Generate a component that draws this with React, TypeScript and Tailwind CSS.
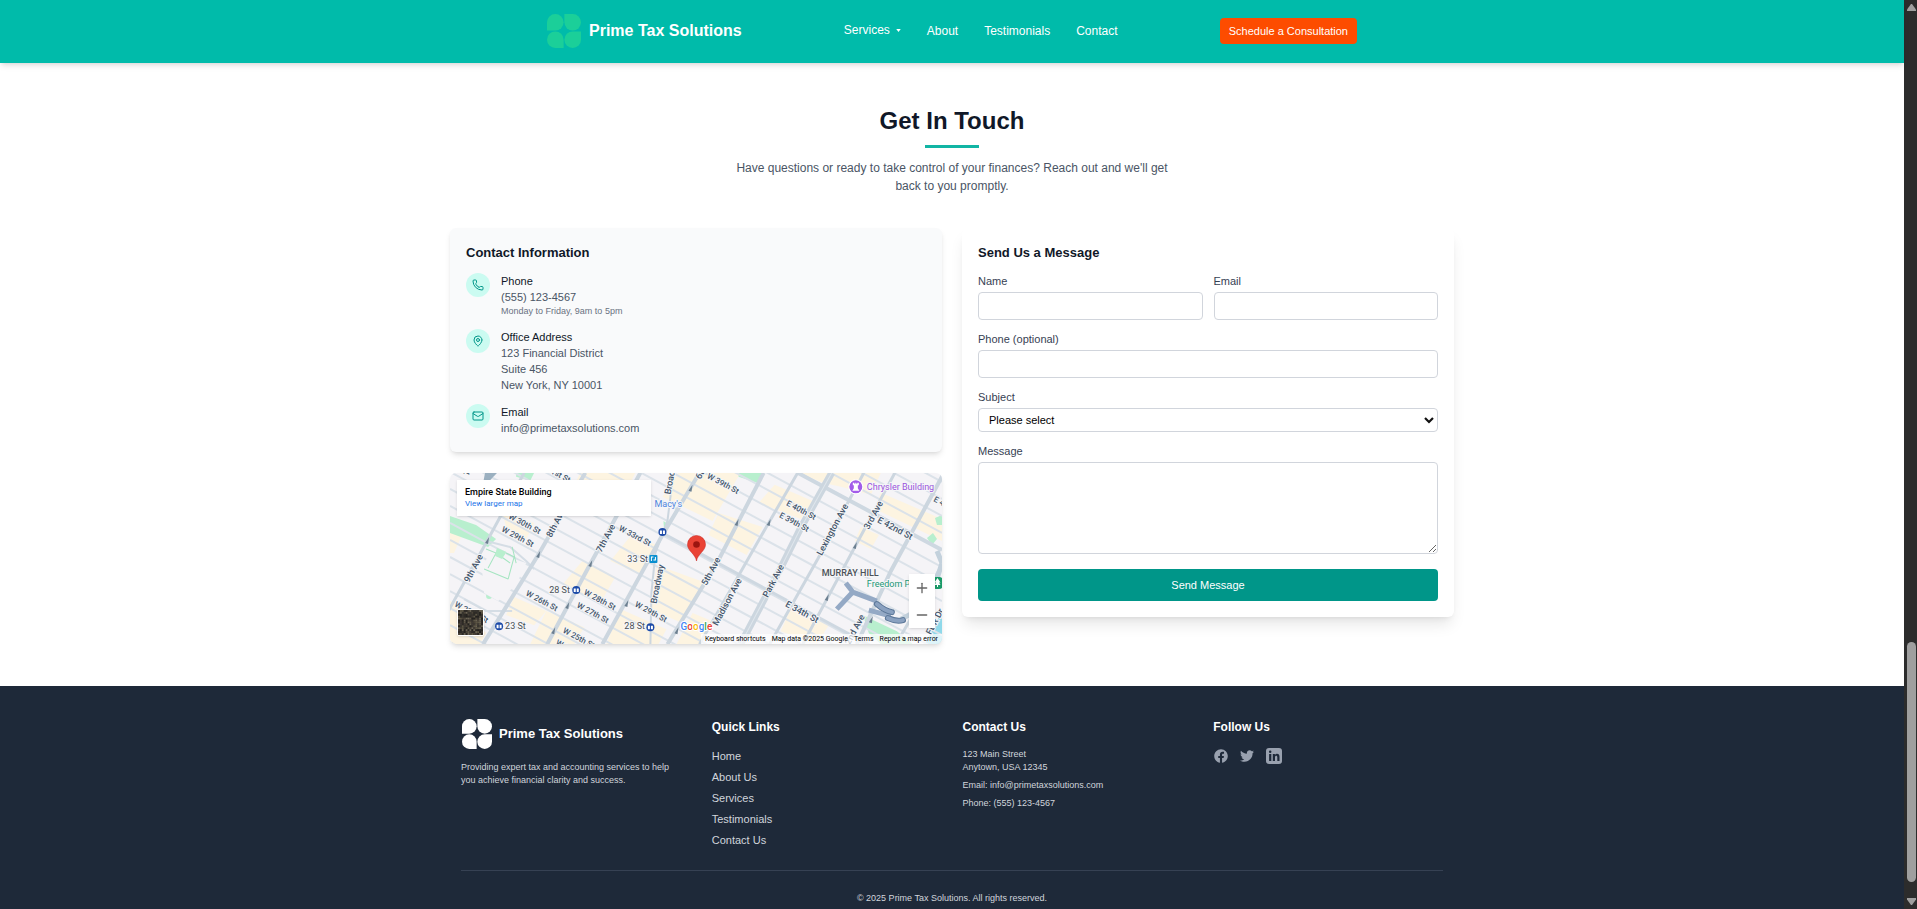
import React from "react";
import { Phone, MapPin, Mail, Plus, Minus } from "lucide-react";
import { FaFacebook, FaTwitter } from "react-icons/fa";

function Logo({ className }: { className: string }) {
  return (
    <svg viewBox="0 0 34 34" className={className} fill="currentColor" aria-hidden="true">
      {[0, 90, 180, 270].map((angle) => (
        <path
          key={angle}
          d="M0 16.6V8.3A8.3 8.3 0 1 1 8.3 16.6Z"
          transform={`rotate(${angle} 17 17)`}
        />
      ))}
    </svg>
  );
}

function LinkedInIcon() {
  return (
    <svg viewBox="0 0 16 16" className="size-4" aria-hidden="true">
      <rect width="16" height="16" rx="3" fill="currentColor" />
      <g fill="#1e2939">
        <circle cx="4.2" cy="3.8" r="1.25" />
        <rect x="3.1" y="6" width="2.2" height="7" />
        <path d="M6.8 6h2.1v1c.5-.8 1.2-1.2 2.1-1.2 1.7 0 2.5 1.1 2.5 2.900V13h-2.200V9.200c0-.9-.3-1.500-1.100-1.500-.8 0-1.200.6-1.200 1.500V13H6.800z" />
      </g>
    </svg>
  );
}

function Header() {
  return (
    <header className="relative z-10 bg-[#00bbaa] text-white shadow-md">
      <div className="mx-auto flex h-[63px] max-w-[810px] items-center justify-between pb-0.5">
        <a href="#home" className="flex items-center gap-2">
          <Logo className="size-[34px] text-[#1bcf99]" />
          <span className="text-base leading-6 font-bold">Prime Tax Solutions</span>
        </a>
        <nav className="flex items-center gap-[26px] text-xs">
          <button type="button" className="flex items-center gap-1.5 pb-px">
            Services
            <svg viewBox="0 0 6 4" className="h-[3px] w-[5px]" fill="currentColor" aria-hidden="true">
              <path d="M0 0h6L3 4z" />
            </svg>
          </button>
          <a href="#about">About</a>
          <a href="#testimonials">Testimonials</a>
          <a href="#contact">Contact</a>
        </nav>
        <a
          href="#schedule"
          className="rounded bg-[#fd4c00] px-[9px] py-[5px] text-[11px] leading-4"
        >
          Schedule a Consultation
        </a>
      </div>
    </header>
  );
}

function ContactItem({
  icon,
  title,
  children,
}: {
  icon: React.ReactNode;
  title: string;
  children: React.ReactNode;
}) {
  return (
    <div className="flex gap-[11px]">
      <div className="flex size-6 shrink-0 items-center justify-center rounded-full bg-[#cbfbf1] text-[#009689]">
        {icon}
      </div>
      <div className="text-[11px] leading-4 text-[#4a5565]">
        <h4 className="font-medium text-[#101828]">{title}</h4>
        {children}
      </div>
    </div>
  );
}

const streetNumbers = Array.from({ length: 28 }, (_, i) => 21 + i);

const avenues: { d: string; w: number }[] = [
  { d: "M-20 171L0 135L37 68L74 0", w: 3 },
  { d: "M33 171L88 82L135 0", w: 4 },
  { d: "M97 171L140 91L190 0", w: 4 },
  { d: "M152 171L212 62L249 0", w: 4 },
  { d: "M200 171L201 120L205 80L217 48L223 0", w: 2 },
  { d: "M217 171L267 89L313 0", w: 4 },
  { d: "M249 171L318 50L347 0", w: 3 },
  { d: "M290 171L330 95L350 55L381 0", w: 7 },
  { d: "M319 171L367 86L413 0", w: 3 },
  { d: "M352 171L404 74L444 0", w: 3 },
  { d: "M406 171L440 98L493 0", w: 4 },
  { d: "M445 171L491 92", w: 3 },
];

const blocks = [
  "M150 0L185 0L168 34L120 20L130 0Z",
  "M228 0L290 0L262 48L212 24Z",
  "M181 62L206 72L190 102L160 88Z",
  "M206 92L256 110L232 150L200 136Z",
  "M132 88L165 104L150 130L112 112Z",
  "M348 0L430 0L420 22L390 14L372 10Z",
  "M430 20L491 46L491 68L424 36Z",
  "M96 138L134 154L124 171L80 171Z",
  "M170 136L216 156L208 171L156 171Z",
  "M0 58L12 62L4 80L0 80Z",
  "M52 38L84 50L76 66L56 54Z",
  "M64 124L96 138L84 152L56 142Z",
  "M0 128L20 138L36 160L30 171L0 171Z",
  "M324 12L362 28L350 46L308 30Z",
  "M268 40L312 54L296 82L258 62Z",
  "M242 140L262 148L250 171L226 171Z",
  "M340 136L378 152L366 171L330 158Z",
  "M410 54L428 62L420 76L404 68Z",
];

const streetLabels: [string, number, number, number][] = [
  ["31st St", 96, -2, 8],
  ["W 30th St", 58, 45, 8],
  ["W 29th St", 51, 58, 8],
  ["W 33rd St", 168, 57, 8],
  ["W 28th St", 133, 121, 8],
  ["W 27th St", 126, 134, 8],
  ["W 26th St", 75, 122, 8],
  ["W 25th St", 112, 159, 8],
  ["W 24th St", 105, 171, 8],
  ["W 29th St", 184, 133, 8],
  ["W 22nd St", 4, 133, 8],
  ["W 39th St", 256, 5, 8],
  ["E 40th St", 335, 32, 8],
  ["E 39th St", 328, 44, 8],
  ["E 42nd St", 426, 49, 9],
  ["E 34th St", 334, 133, 9],
  ["E 43rd St", 482, 28, 8],
];

const avenueLabels: [string, number, number, number][] = [
  ["10th", 18, 4, -62],
  ["9th Ave", 19, 110, -62],
  ["8th Ave", 101, 65, -62],
  ["7th Ave", 151, 80, -62],
  ["6th Ave", 250, 7, -62],
  ["5th Ave", 256, 113, -62],
  ["Madison Ave", 267, 153, -62],
  ["Park Ave", 317, 125, -62],
  ["Lexington Ave", 371, 83, -62],
  ["3rd Ave", 418, 57, -62],
  ["2nd Ave", 399, 172, -62],
  ["Broadway", 206, 131, -79],
  ["Broadway", 220, 22, -79],
  ["FDR Dr", 480, 162, -62],
];

const stations: [number, number][] = [
  [126, 117],
  [49, 153],
  [200, 154],
  [212, 59],
];

const arrows: [number, number][] = [
  [37, 68],
  [88, 82],
  [140, 91],
  [117, 133],
  [103, 158],
  [240, 16],
  [176, 131],
  [226, 158],
  [286, 50],
  [318, 50],
  [404, 73],
  [376, 125],
  [420, 147],
];

function MapDrawing() {
  return (
    <svg
      viewBox="0 0 491 171"
      preserveAspectRatio="xMidYMid slice"
      className="size-full font-[Roboto,sans-serif]"
      role="img"
      aria-label="Map of Midtown Manhattan"
    >
      <rect width="491" height="171" fill="#f5f4f7" />
      <g fill="#fdf4e1">
        {blocks.map((d) => (
          <path key={d} d={d} />
        ))}
      </g>
      <g fill="#b8efce">
        <path d="M0 43L26 52L46 66L38 74L0 60Z" />
        <path d="M288 0L312 0L306 10L288 4Z" />
        <path d="M66 0L84 0L80 8L66 4Z" />
        <path d="M47 75L56 79L52 86L45 83Z" />
        <path d="M40 98L51 103L47 110L37 107Z" />
        <circle cx="39" cy="123" r="3" />
        <path d="M412 142L420 146L446 158L462 171L430 171L418 160Z" />
        <path d="M476 65L482 60L486 66L481 72Z" />
        <path d="M213 48L219 52L214 62Z" />
        <path d="M484 45L491 42L491 52L486 52Z" />
      </g>
      <path d="M491 138V171H474Z" fill="#8fd9ea" />
      <g stroke="#dbe2e9" strokeWidth="2" fill="none">
        {streetNumbers.map((n) => {
          const y = -52 + 17 * (34 - n);
          return <line key={n} x1="0" y1={y} x2="491" y2={y + 265} />;
        })}
      </g>
      <path d="M40 78L76 90L66 112L48 128L34 120L32 96Z" fill="#f5f4f7" />
      <path d="M36 68L60 74L76 88L84 96M14 126L36 138L62 138" stroke="#d5dde5" strokeWidth="2" fill="none" />
      <path d="M36 76L46 80L38 95M56 80L64 84L58 106M46 80L60 90M34 96L58 106M62 74L66 90" stroke="#a5e5c1" fill="none" />
      <path d="M45 83L47 75L56 79L52 86Z" fill="#b8efce" />
      <path d="M347 0L373 14L491 77" stroke="#ced8e1" strokeWidth="4" fill="none" />
      <path d="M212 60L491 211" stroke="#ced8e1" strokeWidth="3" fill="none" />
      <g stroke="#ccd6df" fill="none">
        {avenues.map((a) => (
          <path key={a.d} d={a.d} strokeWidth={a.w} />
        ))}
      </g>
      <path d="M290 171L330 95L350 55L381 0" stroke="#dfe6ec" strokeWidth="1" fill="none" />
      <path d="M35 0L47 0L32 16Z" fill="#9bb0c0" />
      <path d="M486 78L491 90L484 112L462 140L450 146" stroke="#c3d1dc" strokeWidth="5" fill="none" />
      <path d="M395 110L402 119L386 136M402 119L426 128M418 137L440 143" stroke="#94a9c5" strokeWidth="5" fill="none" />
      <g stroke="#5d7899" strokeWidth="6" strokeLinecap="round" fill="none">
        <path d="M426 131Q434 138 441 139" />
        <path d="M437 145Q446 149 452 147" />
      </g>
      <g stroke="#8aa1c0" strokeWidth="4" strokeLinecap="round" fill="none">
        <path d="M426 131Q434 138 441 139" />
        <path d="M437 145Q446 149 452 147" />
      </g>
      <g fill="#6c7f90">
        {arrows.map(([x, y]) => (
          <path key={`${x}-${y}`} d={`M${x - 2} ${y + 2}L${x + 2} ${y - 4}L${x + 1} ${y + 3}Z`} />
        ))}
      </g>
      <g fill="#44556b" fontWeight="500" stroke="#f5f6f8" strokeWidth="2" paintOrder="stroke">
        {streetLabels.map(([text, x, y, size]) => (
          <text key={`${text}-${x}`} fontSize={size} transform={`translate(${x} ${y}) rotate(28)`}>
            {text}
          </text>
        ))}
        {avenueLabels.map(([text, x, y, angle]) => (
          <text key={`${text}-${x}`} fontSize="9" transform={`translate(${x} ${y}) rotate(${angle})`}>
            {text}
          </text>
        ))}
      </g>
      <g fill="#4b5157" fontSize="9" stroke="#f5f6f8" strokeWidth="2" paintOrder="stroke">
        <text x="177" y="89">33 St</text>
        <text x="99" y="120">28 St</text>
        <text x="55" y="156">23 St</text>
        <text x="174" y="156">28 St</text>
        <text x="371" y="103" fontWeight="500">MURRAY HILL</text>
        <text x="204" y="34" fill="#4d84dd">Macy's</text>
        <text x="416" y="17" fill="#9a54dc">Chrysler Building</text>
        <text x="416" y="114" fill="#209776">Freedom Plaza</text>
      </g>
      {stations.map(([x, y]) => (
        <g key={`${x}-${y}`}>
          <circle cx={x} cy={y} r="4" fill="#1c4aa8" />
          <path
            d={`M${x - 2} ${y + 2}V${y - 1}H${x - 1}V${y + 2}M${x + 1} ${y + 2}V${y - 1}H${x + 2}V${y + 2}`}
            stroke="#fff"
            strokeWidth="1"
            fill="none"
          />
        </g>
      ))}
      <rect x="199" y="82" width="8" height="8" rx="1" fill="#0a8fcf" />
      <path d="M201 88V84H203M205 84V87H203" stroke="#fff" fill="none" />
      <circle cx="405" cy="14" r="7" fill="#a35ce9" stroke="#fff" />
      <path d="M402 10h1.5v1h1v-1h1v1h1v-1H408v2.500h-1v3l1.500 2.500h-7l1.500-2.500v-3h-1z" fill="#fff" />
      <rect x="481" y="104" width="11" height="12" rx="4" fill="#1b9a68" />
      <path d="M486.500 105l3 4.500h-1.500l1.500 2.500h-2.500v2h-1v-2h-2.500l1.500-2.500h-1.500z" fill="#fff" />
      <path
        d="M246 88C245 81 237 78 237 71.5A9 9 0 0 1 255 71.5C255 78 247 81 246 88Z"
        fill="#ea4335"
        stroke="#c5221f"
        strokeWidth=".5"
      />
      <circle cx="246" cy="71.5" r="3.3" fill="#9c1510" />
      <text x="230" y="157" fontSize="10" fontWeight="500" stroke="#fff" strokeWidth="2" paintOrder="stroke">
        <tspan fill="#4285f4">G</tspan>
        <tspan fill="#ea4335">o</tspan>
        <tspan fill="#fbbc04">o</tspan>
        <tspan fill="#4285f4">g</tspan>
        <tspan fill="#34a853">l</tspan>
        <tspan fill="#ea4335">e</tspan>
      </text>
    </svg>
  );
}

const tones = ["#2d2a26", "#4a4338", "#38352f", "#5d5645", "#23211e", "#403a35", "#6b6454"];

function SatelliteThumb() {
  const cells = Array.from({ length: 169 }, (_, i) => i);
  return (
    <svg viewBox="0 0 13 13" className="size-full" aria-hidden="true">
      <rect width="13" height="13" fill="#35312b" />
      {cells.map((i) => (
        <rect
          key={i}
          x={i % 13}
          y={Math.floor(i / 13)}
          width="1"
          height="1"
          fill={tones[Math.floor(Math.abs(Math.sin(i * 12.9898) * 43758.5453)) % 7]}
        />
      ))}
    </svg>
  );
}

function MapCard() {
  return (
    <div className="relative h-[171px] overflow-hidden rounded-md font-[Roboto,sans-serif] shadow-md">
      <MapDrawing />
      <div className="absolute top-[7px] left-[7px] h-9 w-[194px] bg-white px-2 pt-1.5 shadow-sm">
        <p className="text-[9px] leading-3 font-medium text-black">Empire State Building</p>
        <a href="#map" className="block text-[8px] leading-3 text-[#1a73e8]">
          View larger map
        </a>
      </div>
      <button
        type="button"
        aria-label="Show satellite imagery"
        className="absolute bottom-2 left-[7px] size-[27px] overflow-hidden rounded-xs border border-white shadow"
      >
        <SatelliteThumb />
      </button>
      <div className="absolute right-[7px] bottom-4 flex w-[26px] flex-col bg-white text-[#666] shadow">
        <button type="button" aria-label="Zoom in" className="flex h-[27px] items-center justify-center">
          <Plus className="size-4" strokeWidth={2} />
        </button>
        <button type="button" aria-label="Zoom out" className="flex h-[27px] items-center justify-center">
          <Minus className="size-4" strokeWidth={2} />
        </button>
      </div>
      <div className="absolute right-0 bottom-0 flex gap-1.5 bg-white/70 px-1 text-[7px] leading-[10px] text-black">
        <button type="button">Keyboard shortcuts</button>
        <span>Map data ©2025 Google</span>
        <a href="#terms">Terms</a>
        <a href="#report">Report a map error</a>
      </div>
    </div>
  );
}

const fieldClass = "block w-full rounded border border-[#d1d5dc] bg-white px-2 text-[11px] text-black";
const labelClass = "mb-[3px] block text-[11px] leading-4 text-[#364153]";

function MessageForm() {
  return (
    <form className="rounded-md bg-white p-4 shadow-lg">
      <h3 className="text-[13px] leading-[18px] font-bold text-[#101828]">Send Us a Message</h3>
      <div className="mt-[11px] flex flex-col gap-[11px]">
        <div className="grid grid-cols-2 gap-[11px]">
          <div>
            <label htmlFor="name" className={labelClass}>Name</label>
            <input id="name" type="text" className={`${fieldClass} h-7`} />
          </div>
          <div>
            <label htmlFor="email" className={labelClass}>Email</label>
            <input id="email" type="email" className={`${fieldClass} h-7`} />
          </div>
        </div>
        <div>
          <label htmlFor="phone" className={labelClass}>Phone (optional)</label>
          <input id="phone" type="tel" className={`${fieldClass} h-7`} />
        </div>
        <div>
          <label htmlFor="subject" className={labelClass}>Subject</label>
          <div className="relative">
            <select id="subject" className={`${fieldClass} h-6 appearance-none pl-2.5`}>
              <option>Please select</option>
            </select>
            <svg
              viewBox="0 0 10 7"
              className="pointer-events-none absolute top-[9px] right-1 h-[7px] w-2.5"
              fill="none"
              stroke="#111"
              strokeWidth="2.2"
              aria-hidden="true"
            >
              <path d="M1 1l4 4 4-4" />
            </svg>
          </div>
        </div>
        <div>
          <label htmlFor="message" className={labelClass}>Message</label>
          <textarea id="message" className={`${fieldClass} h-[92px] resize-y`} />
        </div>
      </div>
      <button
        type="submit"
        className="mt-[15px] block h-8 w-full rounded bg-[#009689] text-[11px] font-medium text-white"
      >
        Send Message
      </button>
    </form>
  );
}

function Footer() {
  return (
    <footer className="bg-[#1e2939] px-4 pt-8 pb-1 text-[#d1d5dc]">
      <div className="mx-auto max-w-[982px]">
        <div className="grid grid-cols-4 gap-[21px]">
          <div>
            <div className="flex items-center gap-1.5">
              <Logo className="size-8 p-px text-white" />
              <span className="text-[13px] leading-5 font-bold text-white">Prime Tax Solutions</span>
            </div>
            <p className="mt-[11px] pr-2 text-[9px] leading-[13px]">
              Providing expert tax and accounting services to help you achieve financial clarity and success.
            </p>
          </div>
          <div>
            <h4 className="text-xs leading-[18px] font-bold text-white">Quick Links</h4>
            <ul className="mt-3 flex flex-col gap-[5px] text-[11px] leading-4">
              {["Home", "About Us", "Services", "Testimonials", "Contact Us"].map((name) => (
                <li key={name}>
                  <a href="#top">{name}</a>
                </li>
              ))}
            </ul>
          </div>
          <div>
            <h4 className="text-xs leading-[18px] font-bold text-white">Contact Us</h4>
            <div className="mt-3 flex flex-col gap-[5px] text-[9px] leading-[13px]">
              <p>
                123 Main Street
                <br />
                Anytown, USA 12345
              </p>
              <p>Email: info@primetaxsolutions.com</p>
              <p>Phone: (555) 123-4567</p>
            </div>
          </div>
          <div>
            <h4 className="text-xs leading-[18px] font-bold text-white">Follow Us</h4>
            <div className="mt-3 flex items-center gap-3 pl-px text-[#99a1af]">
              <a href="#facebook" aria-label="Facebook"><FaFacebook className="size-3.5" /></a>
              <a href="#twitter" aria-label="Twitter"><FaTwitter className="size-3.5" /></a>
              <a href="#linkedin" aria-label="LinkedIn"><LinkedInIcon /></a>
            </div>
          </div>
        </div>
        <p className="mt-[22px] border-t border-[#364153] pt-[21px] text-center text-[9px] leading-[13px]">
          © 2025 Prime Tax Solutions. All rights reserved.
        </p>
      </div>
    </footer>
  );
}

function ScrollBar() {
  return (
    <div
      className="sticky top-0 flex h-screen w-[13px] shrink-0 flex-col items-center bg-[#2c2c2c] py-1 pl-0.5 text-[#9f9f9f]"
      aria-hidden="true"
    >
      <svg viewBox="0 0 9 7" className="h-[7px] w-[9px]" fill="currentColor">
        <path d="M4 0h1l4 5.500V7H0V5.500z" />
      </svg>
      <div className="flex w-[9px] flex-1 flex-col justify-end pb-4">
        <div className="h-[27.5%] rounded-full bg-[#9f9f9f]" />
      </div>
      <svg viewBox="0 0 9 7" className="h-[7px] w-[9px]" fill="currentColor">
        <path d="M4 7h1l4-5.500V0H0V1.500z" />
      </svg>
    </div>
  );
}

export default function App() {
  return (
    <div className="flex min-h-screen bg-white font-['Liberation_Sans',Arial,sans-serif]">
      <div className="min-w-0 flex-1">
        <Header />
        <main className="px-4 pt-[42px] pb-[42px]">
          <section className="text-center">
            <h2 className="text-2xl leading-8 font-bold text-[#101828]">Get In Touch</h2>
            <div className="mx-auto mt-2 h-[3px] w-[54px] bg-[#12b5a4]" />
            <p className="mx-auto mt-[11px] max-w-md text-xs leading-[18px] text-[#4a5565]">
              Have questions or ready to take control of your finances? Reach out and we'll get back to you promptly.
            </p>
          </section>
          <div className="mx-auto mt-[33px] grid max-w-[1004px] grid-cols-2 items-start gap-5">
            <div className="flex flex-col gap-[21px]">
              <section className="rounded-md bg-[#f9fafb] p-4 shadow-md">
                <h3 className="text-[13px] leading-[18px] font-bold text-[#101828]">Contact Information</h3>
                <div className="mt-[11px] flex flex-col gap-[11px]">
                  <ContactItem icon={<Phone className="size-3" />} title="Phone">
                    <p>(555) 123-4567</p>
                    <p className="text-[9px] leading-[13px] text-[#6a7282]">Monday to Friday, 9am to 5pm</p>
                  </ContactItem>
                  <ContactItem icon={<MapPin className="size-3" />} title="Office Address">
                    <p>123 Financial District</p>
                    <p>Suite 456</p>
                    <p>New York, NY 10001</p>
                  </ContactItem>
                  <ContactItem icon={<Mail className="size-3" />} title="Email">
                    <p>info@primetaxsolutions.com</p>
                  </ContactItem>
                </div>
              </section>
              <MapCard />
            </div>
            <MessageForm />
          </div>
        </main>
        <Footer />
      </div>
      <ScrollBar />
    </div>
  );
}
